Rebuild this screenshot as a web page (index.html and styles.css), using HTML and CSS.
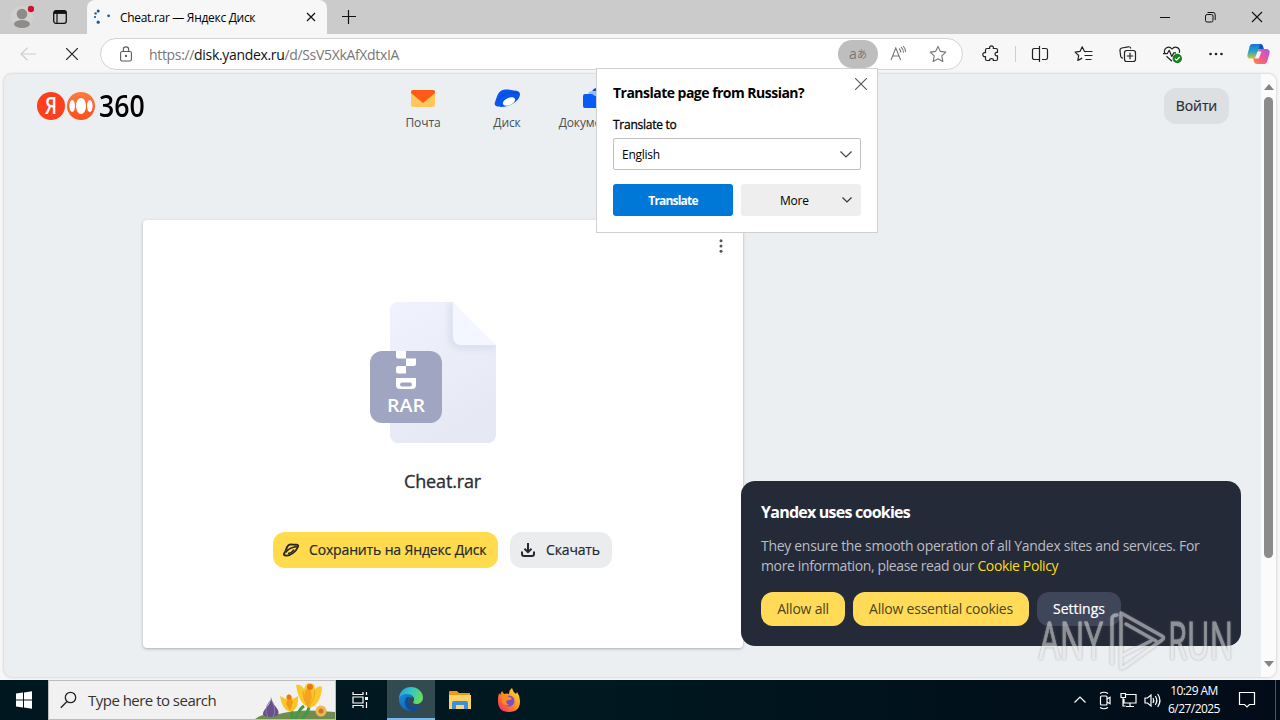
FILE: index.html
```html
<!DOCTYPE html>
<html lang="ru">
<head>
    <meta charset="UTF-8">
    <title>Cheat.rar — Яндекс Диск</title>
    <link rel="stylesheet" href="styles.css">
</head>
<body>
    <div class="tabs">
        <svg class="profile" width="24" height="28" viewBox="0 0 24 28">
            <circle cx="12" cy="14" r="11" fill="#d2d1d0"/>
            <circle cx="12" cy="11" r="5.3" fill="#8e8b88"/>
            <ellipse cx="12" cy="21" rx="8" ry="4" fill="#8e8b88"/>
            <circle cx="21" cy="6" r="3.2" fill="#d0112b"/>
        </svg>
        <svg class="tab-actions" width="16" height="16" viewBox="0 0 16 16" fill="none" stroke="#111">
            <rect x="1.7" y="1.7" width="12.6" height="12.6" rx="2.2" stroke-width="1.3"/>
            <path d="M2 3.4h12" stroke-width="3"/>
            <path d="M5 4v10" stroke-width="1.2"/>
        </svg>
        <div class="tab">
            <svg width="16" height="16" viewBox="0 0 16 16" fill="#1d5a94">
                <circle cx="4.2" cy="2" r="1.5"/><circle cx="1.6" cy="4.4" r="1.2"/><circle cx="1" cy="8" r="1.1"/>
                <circle cx="4.2" cy="13.2" r="1.6"/><circle cx="14.6" cy="6.8" r="1.4"/>
            </svg>
            <span class="tab-title">Cheat.rar — Яндекс Диск</span>
            <svg class="tab-close" width="10" height="10" viewBox="0 0 10 10" stroke="#111" stroke-width="1.2"><path d="M1 1l8 8M9 1L1 9"/></svg>
        </div>
        <svg class="new-tab" width="14" height="14" viewBox="0 0 14 14" stroke="#111" stroke-width="1.2"><path d="M6.500 0v14M0 6.500h14"/></svg>
        <div class="window-buttons">
            <svg width="46" height="34" stroke="#111" fill="none"><path d="M18 17.5h10"/></svg>
            <svg width="46" height="34" stroke="#111" fill="none"><rect x="17.500" y="14.500" width="7.500" height="7.500" rx="1.600"/><path d="M19.500 12.500h5.500a2.200 2.200 0 0 1 2.200 2.200v5.300"/></svg>
            <svg width="46" height="34" stroke="#111" fill="none" stroke-width="1.1"><path d="M18 12l10 10M28 12L18 22"/></svg>
        </div>
    </div>

    <div class="toolbar">
        <svg class="back" width="16" height="14" viewBox="0 0 16 14" fill="none" stroke="#cdcdcd" stroke-width="1.2"><path d="M16 7H1M7.500 .7L1 7l6.500 6.300"/></svg>
        <svg class="stop" width="12" height="12" viewBox="0 0 12 12" stroke="#222" stroke-width="1.2"><path d="M0 0l12 12M12 0L0 12"/></svg>
        <div class="address">
            <svg class="lock" width="12" height="16" viewBox="0 0 12 16" fill="none" stroke="#5b5b5b" stroke-width="1.1">
                <rect x=".6" y="5.500" width="10.800" height="9.500" rx="1.600"/><path d="M3.300 5.500V3.600a2.700 2.700 0 0 1 5.400 0v1.900"/><circle cx="6" cy="10" r=".6" fill="#5b5b5b"/>
            </svg>
            <span class="url">https://<b>disk.yandex.ru</b>/d/SsV5XkAfXdtxIA</span>
            <span class="translate-pill"><i>a</i><i class="kana">あ</i></span>
            <svg class="address-icon" width="40" height="28" viewBox="0 0 40 28" fill="none" stroke="#777" stroke-width="1.100">
                <path d="M13 20l4.800-12 4.800 12M14.700 16h6.400M21 8.500q1.800 1.700 1.800 4M23 6.800q2.600 2.400 2.500 6M25.200 6q2.300 2.500 2.400 6"/>
            </svg>
            <svg class="address-icon" width="40" height="28" viewBox="0 0 40 28" fill="none" stroke="#777" stroke-width="1.100" stroke-linejoin="round">
                <path d="M20 6.400l2.400 5 5.400.7-4 3.800 1 5.500-4.800-2.700-4.800 2.700 1-5.500-4-3.800 5.400-.7z"/>
            </svg>
        </div>
        <div class="toolbar-icons">
            <svg width="44" height="32" viewBox="0 0 44 32" fill="none" stroke="#222" stroke-width="1.200" stroke-linejoin="round">
                <path d="M18 10.500h2.700c-1.300-3.400 4.900-3.400 3.600 0H27q1.500 0 1.500 1.500v2.500c-3.300-1-3.300 4.200 0 3.200V21q0 1.500-1.500 1.500h-2.700c1-2.600-4.600-2.600-3.600 0H18q-1.500 0-1.500-1.500v-2.500c-3.600 1.200-3.600-5 0-3.800V12q0-1.500 1.500-1.500z"/>
            </svg>
            <span class="divider"></span>
            <svg width="44" height="32" viewBox="0 0 44 32" fill="none" stroke="#222" stroke-width="1.200">
                <path d="M19 10.500h-2.800a1.700 1.700 0 0 0-1.700 1.700v7.600a1.700 1.700 0 0 0 1.700 1.700H19M24 10.500h3.800a1.700 1.700 0 0 1 1.700 1.700v7.600a1.700 1.700 0 0 1-1.700 1.700H24M19 10.500h2.500M19 21.500h2.500M21.500 8v16"/>
            </svg>
            <svg width="44" height="32" viewBox="0 0 44 32" fill="none" stroke="#222" stroke-width="1.200" stroke-linejoin="round">
                <path d="M24 13.600l-1.500-.2L20.200 8.800 18 13.400l-4.900.7 3.600 3.400-.9 4.900 4.400-2.300M23.500 13.500h7M22.500 17.500h8M23.500 21.500h6"/>
            </svg>
            <svg width="44" height="32" viewBox="0 0 44 32" fill="none" stroke="#222" stroke-width="1.200" stroke-linejoin="round">
                <path d="M17 20.200c-1.500 0-2-.6-2.300-1.800L14 12.800c-.2-1.600.3-2.500 1.800-2.800l6.400-1.200c1.500-.2 2.200.3 2.700 1.700"/><rect x="18.500" y="12.500" width="11" height="11" rx="2.200"/><path d="M24 14.800v6.400M20.800 18h6.400"/>
            </svg>
            <svg width="44" height="32" viewBox="0 0 44 32" fill="none" stroke="#222" stroke-width="1.200" stroke-linejoin="round">
                <path d="M14.800 15.500c-1.800-5.200 4-8.500 7.200-4.500 3.200-4 8.700-1 7.300 3.800M16.500 18.200l5.500 5M13 15.700h4.200l2-3.400 2.600 6.200 2-3.600H26"/>
                <circle cx="27.300" cy="20.500" r="4.700" fill="#13831d" stroke="none"/><path d="M25 20.600l1.700 1.600 3-3.200" stroke="#fff"/>
            </svg>
            <svg width="44" height="32" viewBox="0 0 44 32" fill="#222"><circle cx="16.500" cy="16" r="1.300"/><circle cx="22" cy="16" r="1.300"/><circle cx="27.500" cy="16" r="1.300"/></svg>
            <svg width="42" height="32" viewBox="0 0 42 32">
                <defs>
                    <linearGradient id="copilotTop" x1="0" y1="0" x2="0" y2="1"><stop offset="0" stop-color="#1477dd"/><stop offset=".55" stop-color="#28aabf"/><stop offset="1" stop-color="#d8c532"/></linearGradient>
                    <linearGradient id="copilotBottom" x1="1" y1="0" x2="0" y2="1"><stop offset="0" stop-color="#a45be5"/><stop offset=".5" stop-color="#ef5596"/><stop offset="1" stop-color="#ff8a3c"/></linearGradient>
                </defs>
                <path d="M14.500 6H22c2 0 2.700 1 3.200 3l.5 2h-3c-1.500 0-2 .6-2.500 2l-2 5.500c-.5 1.300-1 2-2.500 2H12c-2.500 0-3-2-2.400-4.500l2-7.500C12.200 6.700 13 6 14.500 6z" fill="url(#copilotTop)"/>
                <path d="M26.500 26H19c-2 0-2.700-1-3.200-3l-.6-2.500c1.700 0 2.800-.7 3.300-2.200l2-5.300c.5-1.400 1-2 2.500-2H28c3 0 4.200 1.500 3.500 4.500l-2 7c-.6 2.300-1.500 3.500-3 3.500z" fill="url(#copilotBottom)"/>
                <path d="M22 6c2 0 2.700 1 3.200 3l.5 2h-5l1-4.500z" fill="#1a4fc4"/>
                <path d="M19.500 13.500h4l-2.600 7h-4z" fill="#f8f1f3"/>
            </svg>
        </div>
    </div>

    <div class="viewport">
        <div class="page">
            <header>
                <div class="logo">
                    <svg width="60" height="28" viewBox="0 0 60 28">
                        <defs><linearGradient id="orange" x1="0" y1="0" x2="0" y2="1"><stop offset="0" stop-color="#ff7a3d"/><stop offset="1" stop-color="#f9501c"/></linearGradient></defs>
                        <circle cx="14" cy="14" r="14" fill="#fc3f1d"/>
                        <text x="8" y="22" textLength="12" lengthAdjust="spacingAndGlyphs" class="logo-letter">Я</text>
                        <circle cx="44" cy="14" r="14" fill="url(#orange)"/>
                        <ellipse cx="44" cy="14" rx="5" ry="8" fill="#fff"/>
                        <ellipse cx="35.200" cy="14" rx="2.800" ry="6" fill="#fff"/>
                        <ellipse cx="52.800" cy="14" rx="2.800" ry="6" fill="#fff"/>
                    </svg>
                    <span class="logo-number">360</span>
                </div>
                <nav>
                    <a>
                        <svg width="26" height="22" viewBox="0 0 26 22"><rect x="1" y="2" width="24" height="17" rx="2.500" fill="#ffc65c"/><path d="M1 4a2 2 0 0 1 2-2h20a2 2 0 0 1 2 2v1L13 15 1 5z" fill="#ff5a17"/></svg>
                        Почта
                    </a>
                    <a>
                        <svg width="28" height="22" viewBox="0 0 28 22"><path d="M1.800 15C4 8.500 5 2 12 1.500c4-.3 6 .8 9 1 4 .2 6 1.500 6 3.700 0 6.300-10 12.800-18.500 12.800-4.500 0-7.400-1-6.700-4z" fill="#0a55ee"/><ellipse cx="16" cy="13.500" rx="6.500" ry="3.600" transform="rotate(-24 16 13.500)" fill="#fff"/><path d="M5 12C9 6 17 3 26 5.500" fill="none" stroke="#0847c9"/></svg>
                        Диск
                    </a>
                    <a>
                        <svg width="24" height="22" viewBox="0 0 24 22"><path d="M13 4c1-3 2-4 5-4h5v8H13z" fill="#0b4ddb"/><path d="M9 6c1-3 3-3 5-3h9v5H9z" fill="#94bcff"/><path d="M6 6h7l3 2h7v12H6a2 2 0 0 1-2-2V8a2 2 0 0 1 2-2z" fill="#0a5af5"/></svg>
                        Документы
                    </a>
                </nav>
                <button class="login">Войти</button>
            </header>

            <main class="card">
                <svg class="dots" width="4" height="14" viewBox="0 0 4 14" fill="#555"><circle cx="2" cy="1.700" r="1.500"/><circle cx="2" cy="7" r="1.500"/><circle cx="2" cy="12.300" r="1.500"/></svg>
                <svg class="file-icon" width="126" height="142" viewBox="0 0 126 142">
                    <defs>
                        <linearGradient id="paper" x1="0" y1="0" x2=".4" y2="1"><stop offset="0" stop-color="#f0f3fe"/><stop offset="1" stop-color="#e6e8f3"/></linearGradient>
                        <filter id="soft" x="-30%" y="-30%" width="160%" height="160%"><feGaussianBlur stdDeviation="3"/></filter>
                        <clipPath id="sheet"><path d="M28 0h55l43 43v90a8 8 0 0 1-8 8H28a8 8 0 0 1-8-8V8a8 8 0 0 1 8-8z"/></clipPath>
                    </defs>
                    <g clip-path="url(#sheet)">
                        <path d="M20 0h63l43 43v98H20z" fill="url(#paper)"/>
                        <path d="M83 0v35a8 8 0 0 0 8 8h35v3H90a10 10 0 0 1-10-10V0z" fill="#c9cde2" filter="url(#soft)"/>
                        <path d="M83 0v35a8 8 0 0 0 8 8h35z" fill="#f4f7ff"/>
                    </g>
                    <rect y="49" width="72" height="72" rx="12" fill="#a0a6c1"/>
                    <path d="M26 49h10v7.500h10V62q0 2-2 2h-8v7.500h-8q-2 0-2-2V66q0-2 2-2h8v-7.500h-8q-2 0-2-2z" fill="#fff"/>
                    <path d="M26 76h20v7q0 4-4 4H30q-4 0-4-4z" fill="#fff"/><rect x="30" y="80.500" width="12" height="4" rx="2" fill="#a0a6c1"/>
                    <text x="17" y="110" textLength="38" lengthAdjust="spacingAndGlyphs" class="file-type">RAR</text>
                </svg>
                <h1>Cheat.rar</h1>
                <div class="actions">
                    <button class="save">
                        <svg width="16" height="14" viewBox="0 0 16 14" fill="none" stroke="#2b2720" stroke-width="1.900" stroke-linejoin="round"><path d="M1 10.500C3.500 8 3 3 6.500 1.700 8.500 1 10.500 2 13 1.700c2-.2 2.500.8 1.800 2.300C13 8.500 8 12.300 4 12.600 2 12.700.5 12 1 10.500z"/><path d="M2.500 9.500C5.500 5.500 9 4 14 3.500M5 10.500q4-.5 6-4" stroke-width="1.500"/></svg>
                        <span>Сохранить на Яндекс Диск</span>
                    </button>
                    <button class="download">
                        <svg width="14" height="14" viewBox="0 0 14 14" fill="none" stroke="#25282f" stroke-width="2"><path d="M7 0v9M3.500 5.700L7 9.200l3.500-3.500M1 8.500V11q0 2 2 2h8q2 0 2-2V8.500"/></svg>
                        <span>Скачать</span>
                    </button>
                </div>
            </main>
        </div>
        <div class="scrollbar">
            <span class="arrow up"></span>
            <span class="thumb"></span>
            <span class="arrow down"></span>
        </div>
    </div>

    <div class="taskbar">
        <svg class="start" width="48" height="40" viewBox="0 0 48 40" fill="#fff"><path d="M16 13.500l7-1v7h-7zM24 12.400l8-1.200v8.300h-8zM16 20.500h7v7l-7-1zM24 20.500h8v8.300l-8-1.200z"/></svg>
        <div class="search">
            <svg width="18" height="18" viewBox="0 0 18 18" fill="none" stroke="#222" stroke-width="1.300"><circle cx="10.500" cy="6.500" r="5.200"/><path d="M7 10.500L.8 16.700"/></svg>
            <span>Type here to search</span>
            <svg class="flowers" width="80" height="38" viewBox="0 0 80 38">
                <path d="M0 38q10-7 24-5Q45 27 80 31v7z" fill="#6f8d4f"/>
                <path d="M33 23q5 5 4 15M49 25q-6 4-8 13M54 20q2 10-8 18" fill="none" stroke="#3f9b45" stroke-width="3"/>
                <path d="M16 16q1 6 5 10 7 9-5 10-13 0-5-9 5-5 5-11z" fill="#67508b"/><path d="M15 20q-7 9-2 16M17 20q5 9 1 16" stroke="#9379b2" fill="none"/>
                <path d="M25 15l6 3 3-5 4 5 5-3q1 14-8 16-8-2-10-16z" fill="#f9c528"/><path d="M34 14l-3 9 4 7 3-9z" fill="#f39b16"/><circle cx="34" cy="16" r="2.500" fill="#e77716"/>
                <path d="M41 4q5-1 8 4 2-7 6-6 5 0 5 6 4-4 7-2-1 17-12 21-11-3-14-23z" fill="#fbc82b"/><path d="M53 6q-8 10 0 20 7-9 1-20z" fill="#f3a31d"/><path d="M48 10q0 10 6 16M60 9q0 9-6 17" fill="none" stroke="#f3a31d"/><circle cx="55" cy="6" r="3" fill="#e77618"/>
                <circle cx="66" cy="30" r="5.500" fill="#f5b651"/><circle cx="66" cy="30" r="2.500" fill="#c77725"/>
            </svg>
        </div>
        <svg width="51" height="40" viewBox="0 0 51 40" fill="none" stroke="#fff" stroke-width="1.200"><path d="M17 12v2.500h10V12M17 28v-2.500h10V28M17 17h10v6H17zM30.500 12v3M30.500 22v6"/><path d="M29 18.500h3" stroke-width="3"/></svg>
        <div class="task active">
            <svg width="26" height="26" viewBox="0 0 26 26">
                <defs>
                    <linearGradient id="edgeTop" x1="0" y1="0" x2="1" y2=".4"><stop offset="0" stop-color="#219bdc"/><stop offset=".5" stop-color="#34c6c5"/><stop offset="1" stop-color="#62dc61"/></linearGradient>
                    <linearGradient id="edgeBlue" x1="0" y1="0" x2="1" y2="1"><stop offset="0" stop-color="#1b8bdd"/><stop offset="1" stop-color="#0f529f"/></linearGradient>
                </defs>
                <path d="M1 13C1 5.500 6.500 1 13 1s12 5 12 10.500c0 4-3 6.500-6.500 6.500-3 0-4-1-3-2.500 1.500-2.500.5-6-4-6.500C6 8.500 1.500 11.500 1 16z" fill="url(#edgeTop)"/>
                <path d="M1 13c0-3 4-5 8-5 3.500 0 6 1.500 6.500 4C12 10 9.500 13 10.500 16.500 12 21 17.500 22 22.500 19.500 19.500 24 16 25 13 25 6 25 1 20 1 13z" fill="url(#edgeBlue)"/>
                <path d="M9 11c-4 4-2 12 5 14 4 0 7-2 9-5.500-5 2.500-11 1.500-12.500-3Q9.500 13 12 11z" fill="#124b91"/>
            </svg>
        </div>
        <div class="task">
            <svg width="22" height="20" viewBox="0 0 22 20"><path d="M0 2q0-1 1-1h7l2 2h11v16H0z" fill="#e69b1b"/><path d="M0 5h22v14H0z" fill="#fdd264"/><path d="M3 19v-6q0-2 2-2h12q2 0 2 2v6h-4v-4H7v4z" fill="#3c8fd8"/><path d="M7 15h8v4H7z" fill="#f7d676"/></svg>
        </div>
        <div class="task">
            <svg width="24" height="26" viewBox="0 0 24 26">
                <defs><linearGradient id="fox" x1="1" y1="0" x2="0" y2="1"><stop offset="0" stop-color="#ffe83c"/><stop offset=".45" stop-color="#ff981d"/><stop offset="1" stop-color="#f4206d"/></linearGradient></defs>
                <path d="M2 6l1 2 2-4 2 3q3-1 5 0 0-4 3-6 1 4 4 6l1-2q3 4 3 9 0 11-11 11T1 14q0-5 1-8z" fill="url(#fox)"/>
                <circle cx="12" cy="14" r="5.500" fill="#7650cf"/><path d="M5 9q4-2 7 1 2 1 3 1-1 3-5 2-2 3 2 5-5 1-7-3z" fill="#ff8a22"/>
            </svg>
        </div>
        <div class="tray">
            <svg width="96" height="40" viewBox="0 0 96 40" fill="none" stroke="#fff" stroke-width="1.200">
                <path d="M5.500 22.500L11 17l5.500 5.500"/>
                <rect x="31.500" y="16" width="6.500" height="9" rx="1"/><path d="M38 19l3-1.700v6.400L38 22M31 13.500q4-2.500 8 0M31 27.500q4 2.500 8 0"/>
                <path d="M57 14.500h10v8.500H55v-4M61 23v3.500M57 26.500h8M52 13.500h4.500v4H52zM54 17.500V26h2.500"/>
                <path d="M76 18h2.500l3.500-3v11l-3.500-3H76zM84 18q1.500 2.500 0 5M86.300 16q3 4.500 0 9M88.700 14q4.500 6.500 0 13"/>
            </svg>
            <div class="clock"><span>10:29 AM</span><span>6/27/2025</span></div>
            <svg width="50" height="40" viewBox="0 0 50 40" fill="none" stroke="#fff" stroke-width="1.200"><path d="M17.500 12.500h15v12h-5L25 27l-2.500-2.500h-5z"/></svg>
        </div>
    </div>

    <div class="translate-popup">
        <svg class="popup-close" width="12" height="12" viewBox="0 0 12 12" stroke="#555" stroke-width="1.100"><path d="M0 0l12 12M12 0L0 12"/></svg>
        <h2>Translate page from Russian?</h2>
        <label>Translate to</label>
        <div class="select">
            <span>English</span>
            <svg width="12" height="7" viewBox="0 0 12 7" fill="none" stroke="#444" stroke-width="1.200"><path d="M.5 .5L6 6l5.500-5.500"/></svg>
        </div>
        <div class="popup-buttons">
            <button class="primary">Translate</button>
            <button class="more"><span>More</span><svg width="10" height="6" viewBox="0 0 10 6" fill="none" stroke="#333" stroke-width="1.200"><path d="M.5 .5L5 5l4.500-4.500"/></svg></button>
        </div>
    </div>

    <div class="cookies">
        <h3>Yandex uses cookies</h3>
        <p><span class="line-one">They ensure the smooth operation of all Yandex sites and services. For</span><br><span class="line-two">more information, please read our <a>Cookie Policy</a></span></p>
        <div class="cookie-buttons">
            <button class="allow">Allow all</button>
            <button class="essential">Allow essential cookies</button>
            <button class="settings">Settings</button>
        </div>
    </div>

    <svg class="watermark" width="204" height="70" viewBox="0 0 204 70">
        <text x="5" y="53" textLength="64" lengthAdjust="spacingAndGlyphs">ANY</text>
        <g fill="none" stroke-width="3.500" stroke-linejoin="round" stroke-linecap="round">
            <path d="M78 57V13q0-4 5-4M87 8v54M87 7l41 23q3 2 0 4L89 62M92 18l30 17M87 50l30-15"/>
        </g>
        <text x="134" y="53" textLength="65" lengthAdjust="spacingAndGlyphs">RUN</text>
    </svg>
</body>
</html>
```

FILE: styles.css
```css
* {
    box-sizing: border-box;
}

body {
    margin: 0;
    width: 1280px;
    height: 720px;
    overflow: hidden;
    position: relative;
    display: flex;
    flex-direction: column;
    background-color: #f7f7f7;
    font-family: "Open Sans", "Noto Sans", sans-serif;
    color: #000;
}

svg {
    display: block;
    flex-shrink: 0;
}

button {
    border: 0;
    padding: 0;
    margin: 0;
    font-family: inherit;
    white-space: nowrap;
}

/* window title bar */
.tabs {
    height: 34px;
    display: flex;
    align-items: center;
    background-color: #cbcbcb;
}
.profile {
    margin-left: 10px;
}
.tab-actions {
    margin-left: 18px;
}
.tab {
    width: 240px;
    height: 34px;
    margin-left: 19px;
    padding: 0 11px 0 7px;
    display: flex;
    align-items: center;
    background-color: #f7f7f7;
    border-radius: 8px 8px 0 0;
}
.tab-title {
    margin-left: 10px;
    font-size: 12px;
    letter-spacing: -0.3px;
    white-space: nowrap;
}
.tab-close {
    margin-left: auto;
}
.new-tab {
    margin-left: 15px;
}
.window-buttons {
    margin-left: auto;
    display: flex;
}

/* address row */
.toolbar {
    height: 40px;
    display: flex;
    align-items: center;
}
.back {
    margin-left: 20px;
}
.stop {
    margin-left: 30px;
}
.address {
    width: 863px;
    height: 32px;
    margin-left: 22px;
    padding-left: 19px;
    padding-right: 4px;
    display: flex;
    align-items: center;
    background-color: #fff;
    border: 1px solid #d3d3d3;
    border-radius: 16px;
}
.url {
    margin-left: 17px;
    font-size: 14px;
    letter-spacing: -0.33px;
    color: #777;
}
.url b {
    font-weight: normal;
    color: #111;
}
.translate-pill {
    width: 40px;
    height: 28px;
    margin-left: auto;
    display: flex;
    align-items: center;
    justify-content: center;
    background-color: #bebebe;
    border-radius: 14px;
    color: #777;
    font-size: 14px;
}
.translate-pill i {
    font-style: normal;
    line-height: 20px;
}
.translate-pill .kana {
    font-family: "Noto Sans CJK JP", sans-serif;
    font-size: 10px;
}
.toolbar-icons {
    margin-left: 6px;
    display: flex;
    align-items: center;
}
.divider {
    width: 1px;
    height: 16px;
    margin: 0 2px;
    background-color: #cfcfcf;
}

/* web page area */
.viewport {
    height: 603px;
    margin: 0 4px;
    display: flex;
    border-radius: 8px;
    overflow: hidden;
    background-color: #eceff2;
    box-shadow: 0 0 3px #bbb;
}
.page {
    width: 1257px;
}
header {
    display: flex;
    align-items: flex-start;
    height: 146px;
    padding: 14px 32px 0 33px;
}
.logo {
    display: flex;
    align-items: center;
    width: 344px;
    height: 36px;
}
.logo-letter {
    font: 600 23px "Open Sans", sans-serif;
    fill: #fff;
}
.logo-number {
    margin-left: 2px;
    font-size: 31px;
    font-weight: 600;
    line-height: 34px;
    margin-bottom: 2px;
    transform: scaleX(0.86);
    transform-origin: 0 50%;
}
nav {
    display: flex;
}
nav a {
    width: 84px;
    display: flex;
    flex-direction: column;
    align-items: center;
    font-size: 12px;
    line-height: 16px;
    gap: 5px;
    letter-spacing: -0.1px;
    color: #4b4e52;
}
.login {
    width: 65px;
    height: 36px;
    padding-bottom: 2px;
    margin-left: auto;
    border-radius: 12px;
    background-color: #dde0e3;
    font-size: 14px;
    letter-spacing: -0.1px;
    -webkit-text-stroke: 0.2px;
    color: #2b2e33;
}
.card {
    position: relative;
    width: 600px;
    height: 428px;
    margin-left: 139px;
    padding-top: 82px;
    padding-right: 1px;
    display: flex;
    flex-direction: column;
    align-items: center;
    background-color: #fff;
    border-radius: 4px;
    box-shadow: 0 1px 3px #aaadb2;
}
.dots {
    position: absolute;
    top: 19px;
    right: 20px;
}
.file-icon {
    margin-right: 20px;
}
.file-type {
    font: 600 18px "Open Sans", sans-serif;
    fill: #fff;
}
.card h1 {
    margin: 25px 0 0;
    font-size: 18px;
    line-height: 24px;
    font-weight: 400;
    letter-spacing: -0.15px;
    -webkit-text-stroke: 0.35px;
    color: #2b2e33;
}
.actions {
    display: flex;
    gap: 12px;
    margin-top: 39px;
}
.actions button {
    height: 36px;
    display: flex;
    align-items: center;
    gap: 10px;
    padding-left: 10px;
    border-radius: 12px;
    font-size: 14px;
    letter-spacing: -0.15px;
    -webkit-text-stroke: 0.2px;
    color: #25282f;
}
.actions span {
    padding-bottom: 2px;
}
.actions .save {
    width: 225px;
    background-color: #ffdb4d;
}
.actions .download {
    width: 102px;
    padding-left: 11px;
    gap: 11px;
    background-color: #ebecee;
}
.scrollbar {
    width: 15px;
    padding: 10px 0 10px;
    display: flex;
    flex-direction: column;
    align-items: center;
    background-color: #fbfbfb;
}
.arrow {
    border: 5px solid transparent;
}
.arrow.up {
    border-top: 0;
    border-bottom: 6px solid #858585;
}
.arrow.down {
    margin-top: auto;
    border-bottom: 0;
    border-top: 6px solid #858585;
}
.thumb {
    width: 9px;
    height: 461px;
    margin-top: 7px;
    border-radius: 5px;
    background-color: #8b8b8b;
}

/* windows taskbar */
.taskbar {
    height: 40px;
    margin-top: 3px;
    display: flex;
    align-items: center;
    background: linear-gradient(90deg, #00171f, #001820 45%, #020c18);
}
.search {
    width: 288px;
    height: 40px;
    padding-left: 11px;
    display: flex;
    align-items: center;
    background-color: #f1f1f1;
    border: 1px solid #bcbcbc;
    font-size: 15px;
    letter-spacing: -0.52px;
    color: #333;
}
.search span {
    margin-left: 10px;
    white-space: nowrap;
}
.flowers {
    margin-left: auto;
}
.task {
    width: 48px;
    height: 40px;
    margin-right: 1px;
    display: flex;
    align-items: center;
    justify-content: center;
}
.task.active {
    background-color: #344a51;
    border-bottom: 2px solid #76b9ed;
}
.tray {
    margin-left: auto;
    margin-right: 4px;
    padding-right: 3px;
    display: flex;
    align-items: center;
    height: 40px;
    border-right: 1px solid #4b535d;
}
.tray > svg:first-child {
    margin-right: 1px;
}
.clock {
    width: 56px;
    display: flex;
    flex-direction: column;
    align-items: center;
    color: #fff;
    font-size: 12px;
    line-height: 18px;
    letter-spacing: -0.55px;
    white-space: nowrap;
}

/* translate bubble */
.translate-popup {
    position: absolute;
    left: 596px;
    top: 68px;
    width: 282px;
    height: 165px;
    padding: 14px 16px;
    background-color: #fff;
    border: 1px solid #d0d0d0;
}
.popup-close {
    position: absolute;
    top: 9px;
    right: 10px;
}
.translate-popup h2 {
    margin: 0;
    font-size: 14px;
    line-height: 19px;
    font-weight: 700;
    letter-spacing: -0.52px;
    white-space: nowrap;
}
.translate-popup label {
    display: block;
    margin-top: 15px;
    font-size: 12px;
    line-height: 16px;
    letter-spacing: -0.25px;
    -webkit-text-stroke: 0.3px;
}
.select {
    height: 32px;
    margin-top: 5px;
    padding: 0 8px;
    display: flex;
    align-items: center;
    justify-content: space-between;
    border: 1px solid #c2c2c2;
    border-radius: 2px;
    font-size: 12px;
    letter-spacing: -0.25px;
}
.popup-buttons {
    display: flex;
    gap: 8px;
    margin-top: 14px;
}
.popup-buttons button {
    width: 120px;
    height: 32px;
    border-radius: 3px;
    font-size: 12px;
}
.popup-buttons .primary {
    background-color: #0078d7;
    color: #fff;
    font-weight: 700;
    letter-spacing: -0.8px;
}
.popup-buttons .more {
    padding: 0 9px 0 39px;
    letter-spacing: -0.2px;
    display: flex;
    align-items: center;
    justify-content: space-between;
    background-color: #eee;
}

/* cookie banner */
.cookies {
    position: absolute;
    left: 741px;
    top: 481px;
    width: 500px;
    height: 165px;
    padding: 20px;
    border-radius: 14px;
    background-color: #252a38;
    color: #fff;
}
.cookies h3 {
    margin: 0;
    font-size: 16px;
    line-height: 22px;
    font-weight: 700;
    letter-spacing: -0.76px;
}
.cookies p {
    margin: 13px 0 16px;
    font-size: 14px;
    line-height: 20px;
    color: #b9bcc4;
    white-space: nowrap;
}
.line-one {
    letter-spacing: -0.3px;
}
.line-two {
    letter-spacing: -0.37px;
}
.cookies p a {
    color: #ffdc10;
}
.cookie-buttons {
    display: flex;
    gap: 8px;
}
.cookie-buttons button {
    width: 84px;
    height: 34px;
    padding-bottom: 2px;
    border-radius: 12px;
    background-color: #ffdb57;
    font-size: 14px;
    letter-spacing: -0.22px;
    color: #4b431f;
}
.cookie-buttons .essential {
    width: 176px;
}
.cookie-buttons .settings {
    background-color: #40465a;
    color: #fff;
    letter-spacing: 0;
    -webkit-text-stroke: 0.2px;
}
.watermark {
    position: absolute;
    left: 1034px;
    top: 606px;
    opacity: 0.55;
    stroke: #e6e6e8;
    filter: drop-shadow(0 0 1px #777);
}
.watermark text {
    font: 400 51px "Open Sans", sans-serif;
    fill: #e6e6e8;
    stroke-width: 0.8;
}
```
